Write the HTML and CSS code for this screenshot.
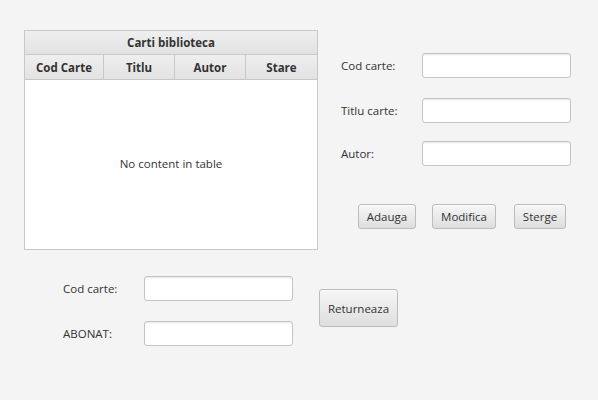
FILE: index.html
```html
<!DOCTYPE html>
<html>
<head>
<meta charset="utf-8">
<link rel="stylesheet" href="styles.css">
</head>
<body>
<div class="app">
  <div class="top">
    <div class="table">
      <div class="caption">Carti biblioteca</div>
      <div class="cols">
        <div class="col c1">Cod Carte</div>
        <div class="col c2">Titlu</div>
        <div class="col c3">Autor</div>
        <div class="col c4">Stare</div>
      </div>
      <div class="body">No content in table</div>
    </div>
    <div class="form">
      <div class="row"><span class="label">Cod carte:</span><input class="field" type="text"></div>
      <div class="row r2"><span class="label">Titlu carte:</span><input class="field" type="text"></div>
      <div class="row r3"><span class="label">Autor:</span><input class="field" type="text"></div>
      <div class="buttons">
        <button class="btn b-add">Adauga</button>
        <button class="btn b-mod">Modifica</button>
        <button class="btn b-del">Sterge</button>
      </div>
    </div>
  </div>
  <div class="bottom">
    <div class="bform">
      <div class="row"><span class="label">Cod carte:</span><input class="field" type="text"></div>
      <div class="row r2b"><span class="label">ABONAT:</span><input class="field" type="text"></div>
    </div>
    <button class="btn b-ret">Returneaza</button>
  </div>
</div>
</body>
</html>
```

FILE: styles.css
```css
html, body {
  margin: 0;
  padding: 0;
  background: #f4f4f4;
}
body {
  width: 598px;
  height: 400px;
  font-family: "Open Sans", "Noto Sans", sans-serif;
  font-size: 11.5px;
  color: #333333;
}
.app {
  display: flex;
  flex-direction: column;
}
.top {
  display: flex;
  padding: 30px 0 0 24px;
}
.table {
  box-sizing: border-box;
  width: 294px;
  height: 220px;
  border: 1px solid #c8c8c8;
  background: #ffffff;
  display: flex;
  flex-direction: column;
}
.caption, .col {
  background: linear-gradient(#efefef, #e2e2e2);
  font-weight: bold;
  display: flex;
  align-items: center;
  justify-content: center;
  box-sizing: border-box;
}
.caption {
  height: 24px;
  border-bottom: 1px solid #c8c8c8;
}
.cols {
  display: flex;
  height: 24px;
  border-bottom: 1px solid #c8c8c8;
}
.col {
  border-right: 1px solid #c8c8c8;
}
.c1 { width: 79px; }
.c2 { width: 71px; }
.c3 { width: 71px; }
.c4 { flex: 1; border-right: none; }
.body {
  flex: 1;
  display: flex;
  align-items: center;
  justify-content: center;
  padding-bottom: 2px;
}
.form {
  margin-left: 23px;
  padding-top: 23px;
  display: flex;
  flex-direction: column;
}
.row {
  display: flex;
  align-items: center;
}
.label {
  width: 81px;
}
.r2 { margin-top: 20px; }
.r3 { margin-top: 18px; }
.field {
  box-sizing: border-box;
  width: 149px;
  height: 25px;
  margin: 0;
  border: 1px solid #c4c4c4;
  border-radius: 3px;
  background: #ffffff;
  box-shadow: inset 0 2px 2px -1px #e6e6e6;
  outline: none;
  padding: 0 6px;
}
.buttons {
  display: flex;
  margin-top: 38px;
  padding-left: 17px;
}
.btn {
  box-sizing: border-box;
  height: 25px;
  margin: 0;
  padding: 0;
  border: 1px solid #bcbcbc;
  border-radius: 3px;
  background: linear-gradient(#f6f6f6, #dedede);
  box-shadow: inset 0 1px 0 #fbfbfb;
  font-family: inherit;
  font-size: 11.5px;
  color: #333333;
}
.b-add { width: 58px; }
.b-mod { width: 64px; margin-left: 16px; }
.b-del { width: 52px; margin-left: 18px; }
.bottom {
  display: flex;
  margin-top: 26px;
  padding-left: 63px;
}
.r2b { margin-top: 20px; }
.b-ret {
  width: 79px;
  height: 38px;
  margin-left: 26px;
  margin-top: 13px;
}
```
